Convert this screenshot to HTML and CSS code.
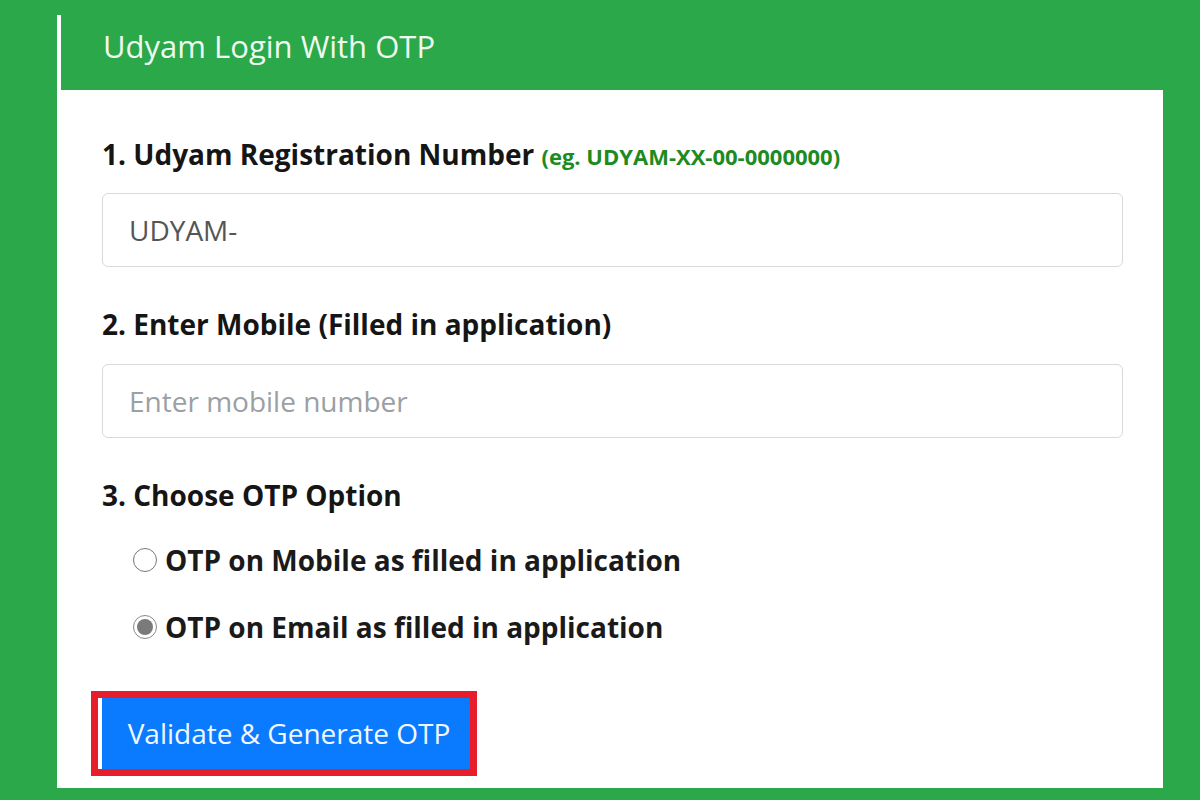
FILE: index.html
```html
<!DOCTYPE html>
<html>
<head>
<meta charset="utf-8">
<link rel="stylesheet" href="styles.css">
</head>
<body>
<div class="panel">
  <div class="panel-head">Udyam Login With OTP</div>
  <div class="panel-body">
    <div class="field">
      <div class="label">1. Udyam Registration Number <span class="hint">(eg. UDYAM-XX-00-0000000)</span></div>
      <div class="input value">UDYAM-</div>
    </div>
    <div class="field field-mobile">
      <div class="label">2. Enter Mobile (Filled in application)</div>
      <div class="input placeholder">Enter mobile number</div>
    </div>
    <div class="field">
      <div class="label">3. Choose OTP Option</div>
      <div class="options">
        <div class="option"><span class="radio"></span>OTP on Mobile as filled in application</div>
        <div class="option"><span class="radio checked"></span>OTP on Email as filled in application</div>
      </div>
    </div>
    <div class="btn-frame"><div class="btn">Validate &amp; Generate OTP</div></div>
  </div>
</div>
</body>
</html>
```
FILE: styles.css
```css
html, body { margin: 0; padding: 0; }
body {
  width: 1200px;
  height: 800px;
  overflow: hidden;
  background: #2ba84a;
  font-family: "Open Sans", "Noto Sans", sans-serif;
  box-sizing: border-box;
  padding: 15px 37px 12px 57px;
}
.panel {
  height: 773px;
  border-left: 4px solid #fff;
  display: flex;
  flex-direction: column;
}
.panel-head {
  height: 75px;
  box-sizing: border-box;
  padding: 12px 0 0 42px;
  color: #eefaf0;
  font-size: 31px;
  line-height: 38px;
}
.panel-body {
  flex: 1;
  background: #fff;
  padding: 46px 40px 0 41px;
}
.label {
  font-weight: bold;
  font-size: 28px;
  color: #151515;
  line-height: 36px;
}
.hint {
  font-size: 22px;
  color: #1d8a22;
}
.input {
  margin: 19px 0 39px;
  height: 74px;
  border: 1px solid #d9d9d9;
  border-radius: 6px;
  box-sizing: border-box;
  padding-left: 26px;
  display: flex;
  align-items: center;
  font-size: 28px;
}
.field-mobile .input { margin-top: 22px; }
.value { color: #555; }
.placeholder { color: #9aa0a4; }
.options { padding: 13px 0 0 31px; }
.option {
  display: flex;
  align-items: center;
  gap: 8px;
  font-weight: bold;
  font-size: 28px;
  color: #1a1a1a;
  height: 67px;
}
.radio {
  width: 24px;
  height: 24px;
  flex: none;
  border: 1px solid #777;
  border-radius: 50%;
  box-sizing: border-box;
  background: #fff;
  position: relative;
}
.radio.checked { border-color: #888; }
.radio.checked::after {
  content: "";
  position: absolute;
  left: 3px; top: 3px;
  width: 16px; height: 16px;
  border-radius: 50%;
  background: #7a7a7a;
}
.btn-frame {
  margin: 31px 0 0 -11px;
  display: inline-block;
  border: 7px solid #e61d2b;
}
.btn {
  width: 372px;
  height: 71px;
  line-height: 71px;
  box-sizing: border-box;
  background: #0a7bff;
  border-left: 4px solid #fff;
  color: #f2f8ff;
  font-size: 28px;
  padding-left: 6px;
  text-align: center;
}
```
